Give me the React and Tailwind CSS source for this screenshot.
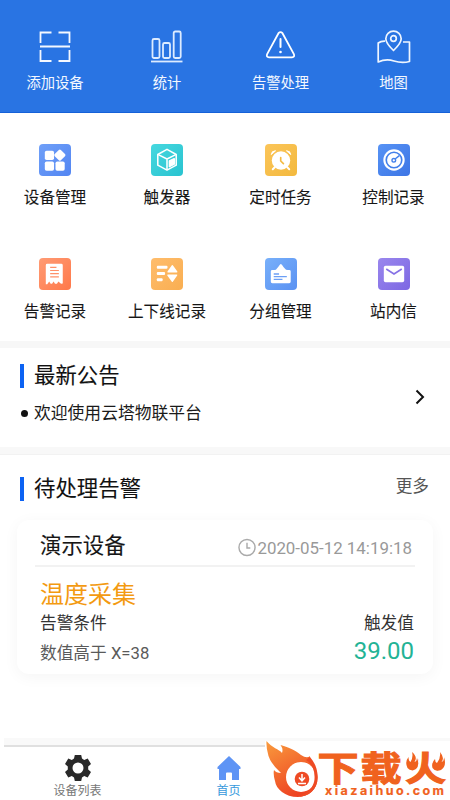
import React from 'react';

const svgProps = { width: 34, height: 34, viewBox: '0 0 34 34', fill: 'none' };

const ScanIcon = () => (
  <svg {...svgProps} stroke="#f4f8ff" strokeWidth="1.8">
    <path d="M2.500 13V2.500h11M20.500 2.500h11V13M2.500 20v11h11M20.500 31h11V20M2 16.500h30" />
  </svg>
);
const ChartIcon = () => (
  <svg {...svgProps} stroke="#dcebff" strokeWidth="1.8">
    <rect x="2.500" y="9" width="7" height="19" rx="1.5" />
    <rect x="13" y="13" width="7" height="15" rx="1.5" />
    <rect x="23.700" y="1.500" width="7" height="26.500" rx="1.5" />
    <path d="M1 31.500h31.500" />
  </svg>
);
const WarnIcon = () => (
  <svg {...svgProps} stroke="#fff" strokeWidth="1.8" strokeLinejoin="round" strokeLinecap="round">
    <path d="M14.500 3.200Q16.500 1 18.500 3.200L30 24.400Q30.800 27.200 28 27.300H5Q2.200 27.200 3 24.400Z" />
    <path d="M16.500 9V17" strokeWidth="2" />
    <circle cx="16.500" cy="22" r="1.300" fill="#fff" stroke="none" />
  </svg>
);
const MapIcon = () => (
  <svg {...svgProps} stroke="#eef5ff" strokeWidth="1.7" strokeLinejoin="round">
    <path d="M8 11.200Q4 11 1.200 13V32Q9 28.500 17 31T32.500 31.500V12H26" />
    <path d="M16.500 20.500Q8.800 13 8.800 8.700A7.700 7.500 0 0 1 24.200 8.700Q24.200 13 16.500 20.500Z" />
    <circle cx="16.500" cy="8.500" r="2.800" />
  </svg>
);

const actions = [
  ['添加设备', ScanIcon],
  ['统计', ChartIcon],
  ['告警处理', WarnIcon],
  ['地图', MapIcon],
];

const tiles = [
  {
    label: '设备管理',
    bg: 'from-[#70a0f8] to-[#5285f2]',
    art: (
      <g fill="#fff">
        <rect x="6" y="7" width="9.500" height="9.500" rx="1.800" />
        <rect x="6" y="18" width="9.500" height="9.500" rx="1.800" />
        <rect x="17" y="18" width="9.500" height="9.500" rx="1.800" />
        <rect x="17" y="7" width="9" height="9" rx="1.500" transform="rotate(45 21.500 11.500)" />
      </g>
    ),
  },
  {
    label: '触发器',
    bg: 'from-[#45d8df] to-[#28c3d0]',
    art: (
      <g stroke="#fff" strokeWidth="1.600" strokeLinejoin="round">
        <path d="M16.500 5.500L26 10.800V21.800L16.500 27L7 21.800V10.800Z" />
        <path d="M7.500 11L16.500 15.500L25.500 11M16.500 15.500V26.500" />
        <path d="M19 17.600L24 15.200V20.700L19 23.400Z" fill="#fff" />
      </g>
    ),
  },
  {
    label: '定时任务',
    bg: 'from-[#fbc559] to-[#f3b93d]',
    art: (
      <g stroke="#fff" strokeWidth="2" strokeLinecap="round">
        <circle cx="16.500" cy="17" r="9.500" fill="#fff" stroke="none" />
        <path d="M6.500 10.500A4 4 0 0 1 10.500 7Z M22.500 7A4 4 0 0 1 26.500 10.500Z" fill="#fff" strokeWidth="1" />
        <path d="M10 24L8 26M23 24L25 26" />
        <path d="M16.200 14V17.500L19 20.300" stroke="#f4bb43" strokeWidth="1.700" />
      </g>
    ),
  },
  {
    label: '控制记录',
    bg: 'from-[#5793f5] to-[#3d75e5]',
    art: (
      <g>
        <circle cx="16.500" cy="16.500" r="11" fill="#fff" />
        <circle cx="16.500" cy="16.500" r="8" stroke="#4380eb" strokeWidth="1.700" />
        <circle cx="16.300" cy="16.800" r="1.900" stroke="#4380eb" strokeWidth="1.400" />
        <path d="M17.600 15.500L22 12" stroke="#4380eb" strokeWidth="1.500" />
      </g>
    ),
  },
  {
    label: '告警记录',
    bg: 'from-[#ff9b74] to-[#ff7849]',
    art: (
      <g>
        <path d="M7 7.500Q7 6 8.500 6H23Q24.500 6 24.500 7.500V26Q23 27.500 21.500 25.500L20 24.300L18.500 26.500H16.500L15 24.300L13.500 26.500H12L10.500 24.300L8.500 27H7Z" fill="#fff" />
        <path d="M11.500 9.700H18M11.500 12.900H20.500M11.500 16.100H20.500M11.500 19.500H20.500" stroke="#ff9069" strokeWidth="1.200" />
      </g>
    ),
  },
  {
    label: '上下线记录',
    bg: 'from-[#ffbd6c] to-[#f9ae51]',
    art: (
      <g fill="#fff">
        <rect x="6" y="8" width="11" height="3" rx="1" />
        <rect x="6" y="14.500" width="8.500" height="3" rx="1" />
        <rect x="6" y="21" width="6" height="3" rx="1" />
        <path d="M21.500 7.500Q22 6.800 22.500 7.500L27.200 14Q27.500 15 26.500 15H17.500Q16.500 15 17 14ZM17.500 17H26.500Q27.500 17.200 27 18L22.500 24.500Q22 25 21.500 24.500L16.800 18Q16.500 17 17.500 17Z" />
      </g>
    ),
  },
  {
    label: '分组管理',
    bg: 'from-[#78b0fa] to-[#5a91f2]',
    art: (
      <g>
        <path d="M6 14Q6 12.500 7.500 12.500H9.500Q11.500 12.500 12.500 10.500Q14 9 14.700 7.800Q16.300 4.500 18 7.800Q19 9.500 20.200 10.500Q21.500 12.500 23.500 12.500H25Q26.500 12.500 26.500 14V24.500Q26.500 26 25 26H7.500Q6 26 6 24.500Z" fill="#fff" />
        <path d="M9 16.500H14.500M9 19.200H22.500M9 22H18" stroke="#6c9ff5" strokeWidth="1.300" />
      </g>
    ),
  },
  {
    label: '站内信',
    bg: 'from-[#9a87ed] to-[#7d67e3]',
    art: (
      <g>
        <rect x="6" y="8" width="21" height="17" rx="1.800" fill="#fff" />
        <path d="M8.500 11.300L16.500 16.500L24.500 11.300" stroke="#8671e5" strokeWidth="1.700" />
      </g>
    ),
  },
];

function Tile({ tile }) {
  return (
    <div className="flex h-[114px] flex-col items-center">
      <div className={`h-8 w-8 rounded-[4px] bg-gradient-to-br ${tile.bg}`}>
        <svg width="32" height="32" viewBox="0 0 33 33" fill="none">{tile.art}</svg>
      </div>
      <span className="mt-[11px] whitespace-nowrap text-[15.600px] leading-[22px] text-[#161616] [-webkit-text-stroke:0.100px_#161616]">
        {tile.label}
      </span>
    </div>
  );
}

function SectionTitle({ children }) {
  return (
    <div className="flex h-6 items-center">
      <div className="mr-[10px] h-6 w-1 bg-[#0d63f3]" />
      <h2 className="text-[21.400px] leading-6 text-[#111] [-webkit-text-stroke:0.100px_#111]">{children}</h2>
    </div>
  );
}

function SiteLogo() {
  return (
    <svg className="absolute bottom-0 right-0 bg-white" width="185" height="59" viewBox="265 741 185 59" fill="none">
      <defs>
        <linearGradient id="flame" x1="0" y1="0" x2="0.500" y2="1">
          <stop offset="0" stopColor="#f99b3d" />
          <stop offset="1" stopColor="#ee4322" />
        </linearGradient>
      </defs>
      <path d="M266.500 741C272 748 279 749 282 753Q283.500 749 280.500 745C292 748 297 752 301 755Q307 759 310 756C309 762 317 766 317.500 776C318.500 789 309 797 298 797C285 797 276 789 275 781Q273 774 274 770Q276 773 281 773Q271 764 268.500 756Q266 748 266.500 741Z" fill="url(#flame)" />
      <circle cx="301" cy="777" r="15" fill="#fff" />
      <path d="M310 757C315 763 317.500 769 317.500 776C318.500 789 309 797 298 797C304 795 315.500 789 314.500 776Q314 765 306 760Z" fill="#ee4a24" />
      <circle cx="302" cy="779" r="7.300" fill="#ee4a24" />
      <path d="M302 774V780M299 777.500L302 780.800L305 777.500M298 783.500H306" stroke="#fff" strokeWidth="1.500" />
      <g fill="#f0621e" fontWeight="700" stroke="#f0621e" strokeWidth="1.200">
        <text transform="translate(317.500 781) scale(1.080 0.900)" fontSize="38">下</text>
        <text transform="translate(360.500 781) scale(1.080 0.900)" fontSize="38">载</text>
        <text transform="translate(405 781) scale(1.080 0.900)" fontSize="38">火</text>
      </g>
      <path d="M405 749H418V770H405ZM432 749H447V770H431Z" fill="#fff" />
      <g fill="#f0621e">
        <path d="M412 752Q418 757 414.500 762Q417 761 417 758Q420 765 416 769Q411 772 407.500 768Q404.500 762 408.500 757Q408.500 761 410.500 762Q413.500 757 412 752Z" />
        <path d="M440 752Q445 758 441.500 762Q444.500 761 444 757Q447 766 441 770Q435 772 432.500 768Q431 763 435 759Q435 762 437 763Q441 758 440 752Z" />
      </g>
      <text x="325" y="795" fill="#f0621e" stroke="#f0621e" strokeWidth="0.200" fontSize="12.500" fontWeight="700" textLength="119" lengthAdjust="spacing" className="font-[Inter,sans-serif]">xiazaihuo.com</text>
    </svg>
  );
}

export default function App() {
  return (
    <div className="relative flex h-[800px] w-[450px] flex-col overflow-hidden bg-white font-[Roboto,'Noto_Sans_CJK_SC',sans-serif]">
      <header className="grid h-[112.500px] grid-cols-[110px_114px_113px_113px] border-b border-[#1561d8] bg-[#2974e3] pt-[30px]">
        {actions.map(([label, Icon]) => (
          <div key={label} className="flex flex-col items-center">
            <Icon />
            <span className="mt-2 text-[14.300px] leading-[22px] text-[#f3f8ff]">{label}</span>
          </div>
        ))}
      </header>

      <section className="grid h-[228.500px] grid-cols-[110px_114px_113px_113px] content-start pt-[31px]">
        {tiles.map((tile) => <Tile key={tile.label} tile={tile} />)}
      </section>

      <section className="flex h-[114px] flex-col border-b border-t-[7px] border-b-[#f2f2f2] border-t-[#f7f7f7]">
        <div className="flex flex-1 justify-between pl-5 pr-[25px] pt-4">
          <div>
            <SectionTitle>最新公告</SectionTitle>
            <div className="mt-[13px] flex items-center">
              <span className="ml-[1px] mr-[6px] h-[7px] w-[7px] rounded-full bg-[#111]" />
              <span className="text-[16.800px] leading-6 text-[#1a1a1a]">欢迎使用云塔物联平台</span>
            </div>
          </div>
          <svg className="mt-[25px]" width="10" height="16" viewBox="0 0 10 16" fill="none" stroke="#111" strokeWidth="2">
            <path d="M1.500 1.500L8 8L1.500 14.500" />
          </svg>
        </div>
        <div className="h-[7px] bg-[#f8f8f8]" />
      </section>

      <section className="h-[283px] px-[17px] pt-[22px]">
        <div className="flex items-start justify-between pl-[3px] pr-1">
          <SectionTitle>待处理告警</SectionTitle>
          <span className="-mt-[2px] h-[26px] text-[16.700px] leading-6 text-[#555]">更多</span>
        </div>
        <article className="mt-[19px] h-[154px] w-[416px] rounded-[12px] bg-white px-[18px] pt-[10px] shadow-[0_3px_16px_rgba(0,0,0,0.045)]">
          <div className="flex h-[37px] items-center justify-between border-b-2 border-[#f2f2f2] pl-[5px] pr-[3px]">
            <h3 className="pb-[3px] text-[21.400px] leading-[30px] text-[#161616] [-webkit-text-stroke:0.100px_#161616]">演示设备</h3>
            <div className="flex items-center text-[16.900px] leading-6 text-[#999]">
              <svg className="mr-[1px]" width="18" height="19" viewBox="0 0 19 19" fill="none" stroke="#aaa" strokeWidth="1.500">
                <circle cx="9.500" cy="9.500" r="8.500" />
                <path d="M9.500 4.500V10H13" />
              </svg>
              2020-05-12 14:19:18
            </div>
          </div>
          <div className="flex justify-between pl-[5px] pr-[1px] pt-[12px]">
            <div className="flex flex-col">
              <span className="text-[24px] leading-[33px] text-[#f39a11]">温度采集</span>
              <span className="text-[16.700px] leading-6 text-[#333]">告警条件</span>
              <span className="mt-[6px] text-[16.700px] leading-6 text-[#5a5a5a]">数值高于 X=38</span>
            </div>
            <div className="flex flex-col items-end pt-[33px]">
              <span className="text-[16.700px] leading-6 text-[#333]">触发值</span>
              <span className="-mt-[1px] text-[24px] leading-8 text-[#23b395]">39.00</span>
            </div>
          </div>
        </article>
      </section>

      <nav className="ml-1 flex h-[62px] border-t-[7px] border-[#f9f9f9]">
        <div className="grid flex-1 grid-cols-[147px_155px_144px] border-t-2 border-[#e0e0e0]">
          <div className="flex flex-col items-center pt-[7px]">
            <svg width="28" height="28" viewBox="0 0 28 28">
              <path fillRule="evenodd" fill="#292929" d="M10.800 1H17.200L18 4.600L20.200 5.900L23.700 4.500L27 10L24.200 12.600V15.400L27 18L23.700 23.500L20.200 22.100L18 23.400L17.200 27H10.800L10 23.400L7.800 22.100L4.300 23.500L1 18L3.800 15.400V12.600L1 10L4.300 4.500L7.800 5.900L10 4.600ZM14 8.500A5.500 5.500 0 1 0 14 19.500A5.500 5.500 0 1 0 14 8.500Z" />
            </svg>
            <span className="mt-[1px] text-[12px] leading-[16px] text-[#777]">设备列表</span>
          </div>
          <div className="flex flex-col items-center pt-[8px]">
            <svg width="24" height="28" viewBox="0 0 24 28">
              <path d="M12 1L23.500 12V14H22V25H15V18.500Q15 17.500 14 17.500H10Q9 17.500 9 18.500V25H2V14H0.500V12Z" fill="#5e94f5" />
            </svg>
            <span className="text-[12px] leading-[16px] text-[#3799dc]">首页</span>
          </div>
        </div>
      </nav>

      <SiteLogo />
    </div>
  );
}
